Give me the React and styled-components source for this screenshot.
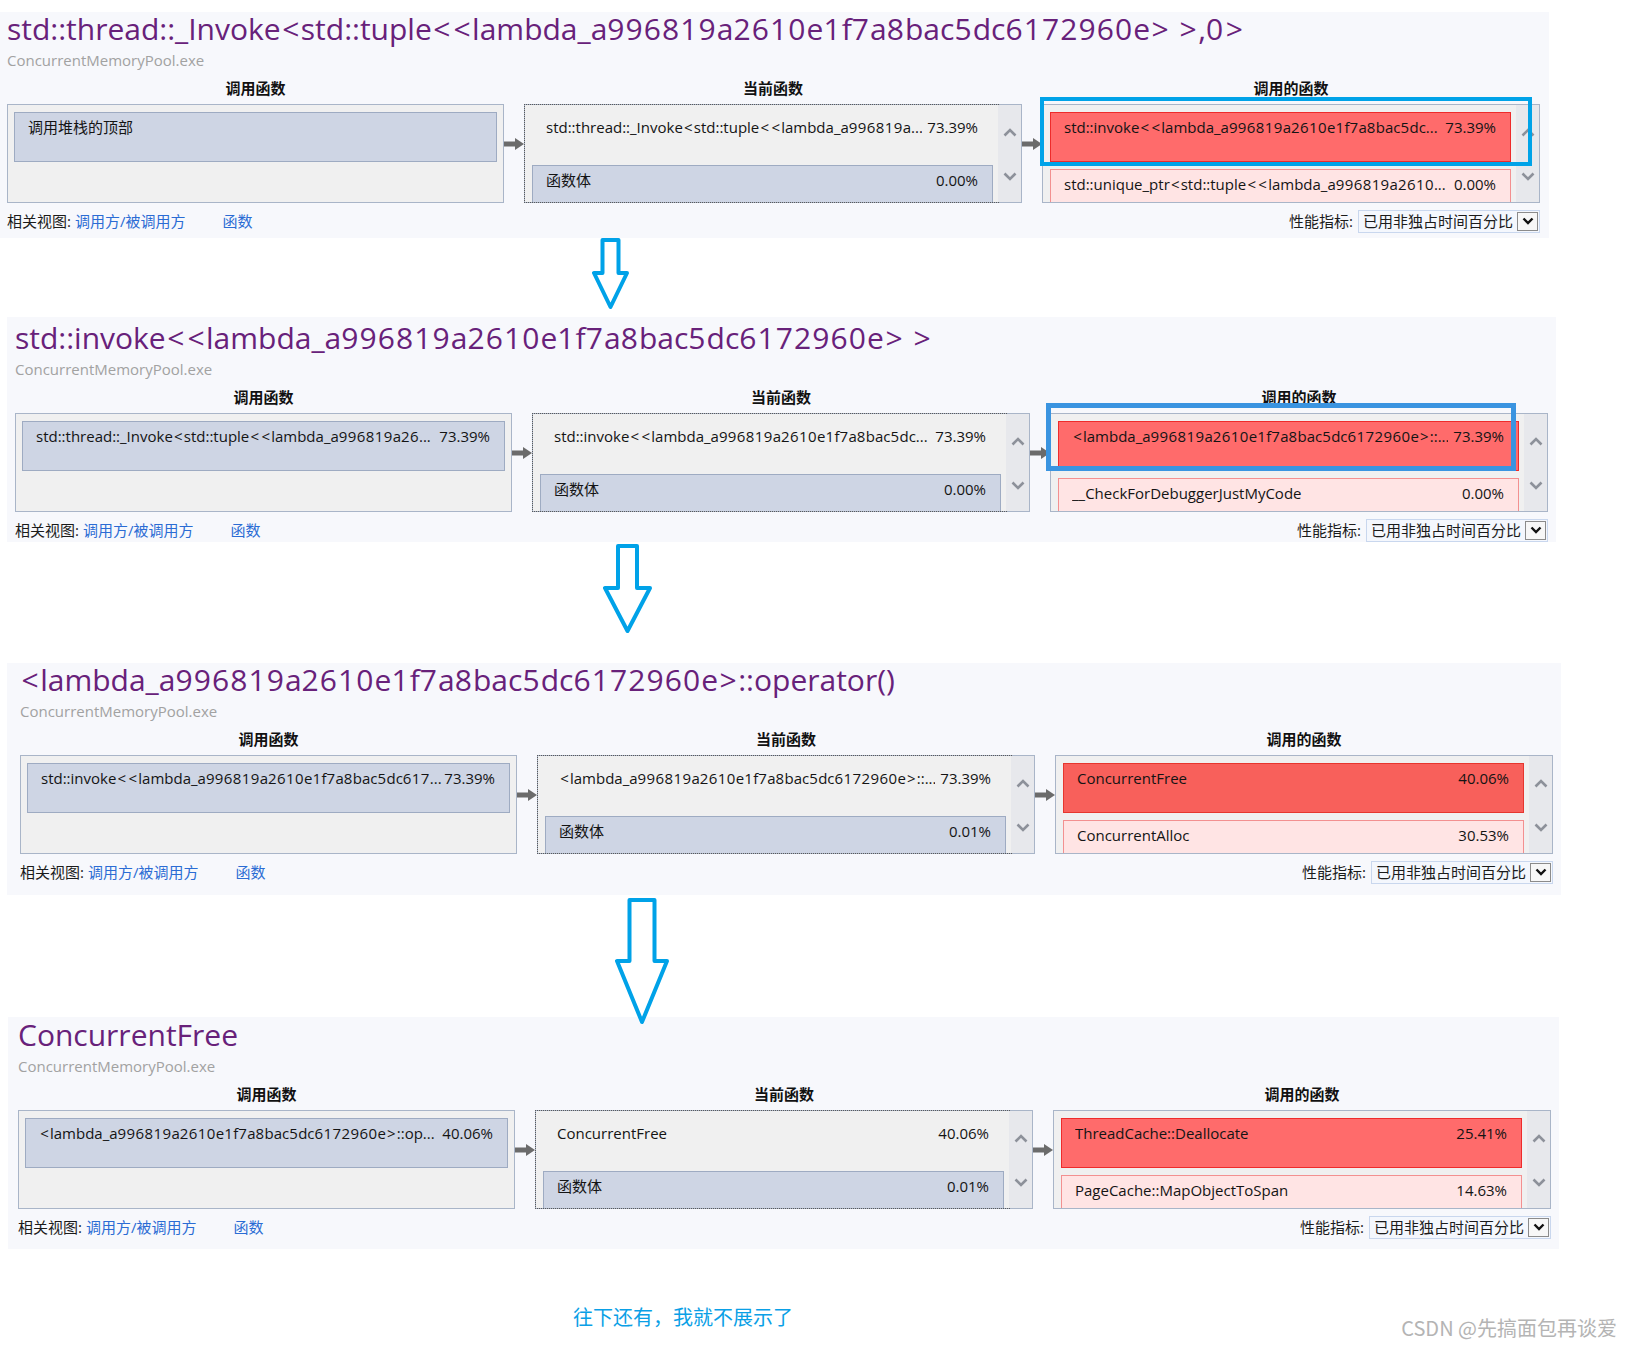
import React from "react";
import styled, { createGlobalStyle } from "styled-components";

const FONT = `"Open Sans", "Noto Sans CJK SC", sans-serif`;

const GlobalStyle = createGlobalStyle`
  html, body {
    margin: 0;
    padding: 0;
    background: #ffffff;
  }
  body {
    font-family: ${FONT};
    color: #1b1b1b;
  }
`;

const Page = styled.div`
  width: 1630px;
  height: 1348px;
  padding-top: 12px;
  box-sizing: border-box;
  overflow: hidden;
  background: #ffffff;
`;

const Panel = styled.section`
  display: flow-root;
  margin-left: ${(p) => p.$x}px;
  width: ${(p) => p.$w}px;
  height: ${(p) => p.$h}px;
  padding: ${(p) => p.$pt}px 0 0 ${(p) => p.$pl}px;
  box-sizing: border-box;
  background: #f7f8fc;
`;

const Title = styled.h1`
  margin: -3px 0;
  font-size: 30px;
  line-height: 40px;
  font-weight: 400;
  color: #68217a;
  white-space: nowrap;
`;

const Sub = styled.div`
  margin-top: 4px;
  font-size: 15px;
  line-height: 20px;
  color: #a2a2a2;
`;

const Columns = styled.div`
  display: grid;
  grid-template-columns: 497px 20px 498px 20px 498px;
  margin-top: ${(p) => p.$mt}px;
`;

const Head = styled.div`
  grid-column: ${(p) => p.$col};
  text-align: center;
  font-size: 15px;
  line-height: 18px;
  font-weight: 700;
  color: #111;
`;

const Cell = styled.div`
  position: relative;
`;

const Box = styled.div`
  height: 99px;
  box-sizing: border-box;
  border: 1px solid #a9b5c8;
  background: #f0f0f0;
  display: flex;
`;

const List = styled.div`
  flex: 1;
  min-width: 0;
  padding: 7px ${(p) => (p.$scroll ? 5 : 6)}px 0 ${(p) => (p.$scroll ? 7 : 6)}px;
  display: flex;
  flex-direction: column;
  gap: ${(p) => p.$gap}px;
  overflow: hidden;
  ${(p) => p.$focus && "outline: 1px dotted #5a5a5a;"}
`;

const TONES = {
  plain: { bg: "transparent", line: "transparent" },
  frame: { bg: "#ced5e4", line: "#9eabc2" },
  hot: { bg: "#ff6b6b", line: "#ee2b2b" },
  hotter: { bg: "#f8605b", line: "#e6362e" },
  warm: { bg: "#ffe4e4", line: "#f39090" },
};

const Item = styled.div`
  flex: none;
  height: 50px;
  box-sizing: border-box;
  padding: 3px 14px 0 13px;
  display: flex;
  gap: ${(p) => (p.$tight ? 1 : 5)}px;
  font-size: 15px;
  line-height: 22px;
  color: #141414;
  background: ${(p) => TONES[p.$tone].bg};
  border: 1px solid ${(p) => TONES[p.$tone].line};
`;

const Name = styled.span`
  flex: 1;
  min-width: 0;
  white-space: nowrap;
  overflow: hidden;
`;

const Pct = styled.span`
  flex: none;
`;

const Digits = styled.span`
  letter-spacing: ${(p) => p.$ls}px;
`;

const Angle = styled.span`
  margin: 0 ${(p) => p.$m}px;
`;

const Scroll = styled.div`
  flex: none;
  width: 23px;
  background: #e7e8ec;
  display: flex;
  flex-direction: column;
  align-items: center;
  padding-top: 23px;
  gap: 35px;
`;

const LinkCell = styled.div`
  padding-top: 29px;
`;

const Mark = styled.div`
  position: absolute;
  left: ${(p) => p.$left}px;
  top: ${(p) => p.$top}px;
  width: ${(p) => p.$width}px;
  height: ${(p) => p.$height}px;
  box-sizing: border-box;
  border: ${(p) => p.$stroke}px solid ${(p) => p.$color};
`;

const Footer = styled.div`
  width: 1533px;
  height: 24px;
  margin-top: 6px;
  display: flex;
  align-items: center;
  justify-content: space-between;
  font-size: 15px;
  line-height: 20px;
  color: #1b1b1b;
`;

const Related = styled.div`
  display: flex;
  align-items: center;
`;

const ViewLink = styled.span`
  color: #2b6cd4;
  margin-left: ${(p) => p.$ml}px;
`;

const Metric = styled.div`
  display: flex;
  align-items: center;
`;

const Select = styled.div`
  margin-left: 5px;
  height: 23px;
  box-sizing: border-box;
  border: 1px solid #c9d7ee;
  background: #f4f7fd;
  display: flex;
  align-items: center;
  padding-left: 4px;
`;

const DropBtn = styled.div`
  width: 21px;
  height: 19px;
  box-sizing: border-box;
  margin: 0 1px 0 4px;
  border: 1px solid #8b8b8b;
  background: #f7f7f7;
  display: flex;
  align-items: center;
  justify-content: center;
`;

const ArrowSlot = styled.div`
  height: ${(p) => p.$h}px;
  padding: ${(p) => p.$top}px 0 0 ${(p) => p.$left}px;
  box-sizing: border-box;

  svg {
    display: block;
    position: relative;
    z-index: 1;
  }
`;

const Bottom = styled.div`
  display: flex;
  align-items: flex-start;
  margin-top: 55px;
`;

const Note = styled.div`
  margin-left: 573px;
  font-size: 20px;
  line-height: 28px;
  color: #0aa0e6;
`;

const Watermark = styled.div`
  margin-left: auto;
  margin-right: 13px;
  margin-top: 10px;
  font-family: "Noto Sans CJK SC", sans-serif;
  font-size: 20px;
  line-height: 28px;
  color: #b4b4b4;
`;

// Segoe UI (the original font) sets digits and angle brackets wider than Open Sans
const Code = ({ text, ls, m }) =>
  text
    .split(/(\d+|[<>])/)
    .filter(Boolean)
    .map((part, i) => {
      if (/^\d/.test(part)) {
        return (
          <Digits key={i} $ls={ls}>
            {part}
          </Digits>
        );
      }
      if (part === "<" || part === ">") {
        return (
          <Angle key={i} $m={m}>
            {part}
          </Angle>
        );
      }
      return part;
    });

const Chevron = ({ up }) => (
  <svg width="14" height="9" viewBox="0 0 14 9">
    <polyline
      points={up ? "1.5,7.5 7,2 12.5,7.5" : "1.5,1.5 7,7 12.5,1.5"}
      fill="none"
      stroke="#8d919a"
      strokeWidth="2.6"
    />
  </svg>
);

const Link = () => (
  <LinkCell>
    <svg width="20" height="12" viewBox="0 0 20 12">
      <rect x="0" y="3.5" width="12" height="5" fill="#6b6b6b" />
      <polygon points="11,0 20,6 11,12" fill="#6b6b6b" />
    </svg>
  </LinkCell>
);

const DownArrow = ({ head, shaft, shaftH, headH, sw = 4, color = "#00a2e8" }) => {
  const i = sw / 2;
  const cx = head / 2;
  const s = shaft / 2;
  const h = shaftH + headH;
  const pts = [
    [cx - s + i, i],
    [cx + s - i, i],
    [cx + s - i, shaftH],
    [head - i, shaftH],
    [cx, h - i],
    [i, shaftH],
    [cx - s + i, shaftH],
  ]
    .map((p) => p.join(","))
    .join(" ");
  return (
    <svg width={head} height={h} viewBox={`0 0 ${head} ${h}`}>
      <polygon
        points={pts}
        fill="#ffffff"
        stroke={color}
        strokeWidth={sw}
        strokeLinejoin="round"
      />
    </svg>
  );
};

const Entries = ({ items }) =>
  items.map((it, idx) => (
    <Item key={idx} $tone={it.kind} $tight={it.tight}>
      <Name>
        <Code text={it.name} ls={0.4} m={1.2} />
      </Name>
      {it.pct && <Pct>{it.pct}</Pct>}
    </Item>
  ));

const PANELS = [
  {
    x: 0,
    w: 1549,
    h: 226,
    pt: 0,
    pl: 7,
    title:
      "std::thread::_Invoke<std::tuple<<lambda_a996819a2610e1f7a8bac5dc6172960e> >,0>",
    callers: [{ kind: "frame", name: "调用堆栈的顶部" }],
    current: [
      {
        kind: "plain",
        name: "std::thread::_Invoke<std::tuple<<lambda_a996819a...",
        pct: "73.39%",
      },
      { kind: "frame", name: "函数体", pct: "0.00%" },
    ],
    callees: [
      {
        kind: "hot",
        name: "std::invoke<<lambda_a996819a2610e1f7a8bac5dc...",
        pct: "73.39%",
      },
      {
        kind: "warm",
        name: "std::unique_ptr<std::tuple<<lambda_a996819a2610...",
        pct: "0.00%",
      },
    ],
    mark: { left: -2, top: -7, width: 492, height: 69, stroke: 4, color: "#00a3e8" },
  },
  {
    x: 7,
    w: 1549,
    h: 225,
    pt: 4,
    pl: 8,
    title: "std::invoke<<lambda_a996819a2610e1f7a8bac5dc6172960e> >",
    callers: [
      {
        kind: "frame",
        name: "std::thread::_Invoke<std::tuple<<lambda_a996819a26...",
        pct: "73.39%",
      },
    ],
    current: [
      {
        kind: "plain",
        name: "std::invoke<<lambda_a996819a2610e1f7a8bac5dc...",
        pct: "73.39%",
      },
      { kind: "frame", name: "函数体", pct: "0.00%" },
    ],
    callees: [
      {
        kind: "hot",
        name: "<lambda_a996819a2610e1f7a8bac5dc6172960e>::...",
        pct: "73.39%",
      },
      { kind: "warm", name: "__CheckForDebuggerJustMyCode", pct: "0.00%" },
    ],
    mark: { left: -4, top: -10, width: 470, height: 68, stroke: 5, color: "#3a94e0" },
  },
  {
    x: 7,
    w: 1554,
    h: 232,
    pt: 0,
    pl: 13,
    title: "<lambda_a996819a2610e1f7a8bac5dc6172960e>::operator()",
    callers: [
      {
        kind: "frame",
        name: "std::invoke<<lambda_a996819a2610e1f7a8bac5dc617...",
        pct: "73.39%",
        tight: true,
      },
    ],
    current: [
      {
        kind: "plain",
        name: "<lambda_a996819a2610e1f7a8bac5dc6172960e>::...",
        pct: "73.39%",
      },
      { kind: "frame", name: "函数体", pct: "0.01%" },
    ],
    callees: [
      { kind: "hotter", name: "ConcurrentFree", pct: "40.06%" },
      { kind: "warm", name: "ConcurrentAlloc", pct: "30.53%" },
    ],
  },
  {
    x: 8,
    w: 1551,
    h: 232,
    pt: 1,
    pl: 10,
    title: "ConcurrentFree",
    callers: [
      {
        kind: "frame",
        name: "<lambda_a996819a2610e1f7a8bac5dc6172960e>::op...",
        pct: "40.06%",
      },
    ],
    current: [
      { kind: "plain", name: "ConcurrentFree", pct: "40.06%" },
      { kind: "frame", name: "函数体", pct: "0.01%" },
    ],
    callees: [
      { kind: "hot", name: "ThreadCache::Deallocate", pct: "25.41%" },
      { kind: "warm", name: "PageCache::MapObjectToSpan", pct: "14.63%" },
    ],
  },
];

const ARROWS = [
  { h: 79, top: 0, left: 592, head: 37, shaft: 20, shaftH: 35, headH: 36 },
  { h: 121, top: 2, left: 603, head: 49, shaft: 23, shaftH: 44, headH: 45 },
  { h: 122, top: 3, left: 615, head: 54, shaft: 29, shaftH: 63, headH: 63 },
];

const CallPanel = ({ data }) => (
  <Panel $x={data.x} $w={data.w} $h={data.h} $pt={data.pt} $pl={data.pl}>
    <Title>
      <Code text={data.title} ls={1.1} m={1.5} />
    </Title>
    <Sub>ConcurrentMemoryPool.exe</Sub>
    <Columns $mt={9}>
      <Head $col={1}>调用函数</Head>
      <Head $col={3}>当前函数</Head>
      <Head $col={5}>调用的函数</Head>
    </Columns>
    <Columns $mt={7}>
      <Cell>
        <Box>
          <List $gap={5}>
            <Entries items={data.callers} />
          </List>
        </Box>
      </Cell>
      <Link />
      <Cell>
        <Box>
          <List $scroll $focus $gap={3}>
            <Entries items={data.current} />
          </List>
          <Scroll>
            <Chevron up />
            <Chevron />
          </Scroll>
        </Box>
      </Cell>
      <Link />
      <Cell>
        <Box>
          <List $scroll $gap={7}>
            <Entries items={data.callees} />
          </List>
          <Scroll>
            <Chevron up />
            <Chevron />
          </Scroll>
        </Box>
        {data.mark && (
          <Mark
            $left={data.mark.left}
            $top={data.mark.top}
            $width={data.mark.width}
            $height={data.mark.height}
            $stroke={data.mark.stroke}
            $color={data.mark.color}
          />
        )}
      </Cell>
    </Columns>
    <Footer>
      <Related>
        相关视图:
        <ViewLink $ml={4}>调用方/被调用方</ViewLink>
        <ViewLink $ml={37}>函数</ViewLink>
      </Related>
      <Metric>
        性能指标:
        <Select>
          已用非独占时间百分比
          <DropBtn>
            <svg width="12" height="8" viewBox="0 0 12 8">
              <polyline
                points="1.5,1.5 6,6 10.5,1.5"
                fill="none"
                stroke="#111"
                strokeWidth="2.4"
              />
            </svg>
          </DropBtn>
        </Select>
      </Metric>
    </Footer>
  </Panel>
);

export default function App() {
  return (
    <Page>
      <GlobalStyle />
      {PANELS.map((panel, idx) => (
        <React.Fragment key={idx}>
          <CallPanel data={panel} />
          {ARROWS[idx] && (
            <ArrowSlot $h={ARROWS[idx].h} $top={ARROWS[idx].top} $left={ARROWS[idx].left}>
              <DownArrow {...ARROWS[idx]} />
            </ArrowSlot>
          )}
        </React.Fragment>
      ))}
      <Bottom>
        <Note>往下还有，我就不展示了</Note>
        <Watermark>CSDN @先搞面包再谈爱</Watermark>
      </Bottom>
    </Page>
  );
}
